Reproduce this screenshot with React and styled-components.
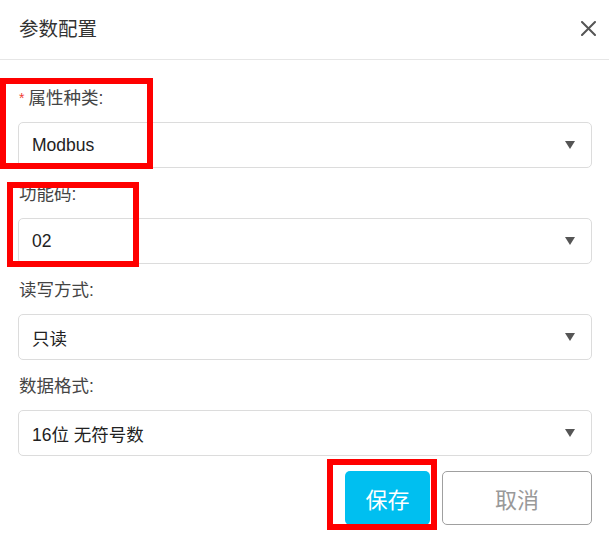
import React from "react";
import styled, { createGlobalStyle } from "styled-components";

const GlobalStyle = createGlobalStyle`
  html, body {
    margin: 0;
    padding: 0;
    background: #ffffff;
  }
  body {
    font-family: "Liberation Sans", Arial, "Noto Sans CJK SC", sans-serif;
  }
  * {
    box-sizing: border-box;
  }
`;

const fields = [
  { label: "属性种类:", value: "Modbus", required: true },
  { label: "功能码:", value: "02" },
  { label: "读写方式:", value: "只读" },
  { label: "数据格式:", value: "16位 无符号数" },
];

const App = () => {
  return (
    <>
      <GlobalStyle />
      <Dialog>
        <Header>
          <Title>参数配置</Title>
          <CloseButton aria-label="close">
            <svg width="15" height="15" viewBox="0 0 15 15">
              <path
                d="M1 1 L14 14 M14 1 L1 14"
                stroke="#555"
                strokeWidth="2"
                strokeLinecap="round"
              />
            </svg>
          </CloseButton>
        </Header>
        <Body>
          {fields.map((f) => (
            <Field key={f.label}>
              <Label>
                {f.required && <Star>*</Star>}
                {f.label}
              </Label>
              <Select>
                <SelectValue>{f.value}</SelectValue>
                <Arrow />
              </Select>
            </Field>
          ))}
          <Footer>
            <SaveButton>保存</SaveButton>
            <CancelButton>取消</CancelButton>
          </Footer>
        </Body>

        <Mark $top={78} $left={0} $width={153} $height={91} />
        <Mark $top={182} $left={7} $width={132} $height={85} />
        <Mark $top={459} $left={327} $width={110} $height={71} />
      </Dialog>
    </>
  );
};

const Dialog = styled.div`
  position: relative;
  width: 609px;
  height: 533px;
  background: #fff;
  overflow: hidden;
`;

const Header = styled.div`
  display: flex;
  align-items: center;
  justify-content: space-between;
  height: 60px;
  padding: 0 13px 2px 19px;
  border-bottom: 1px solid #e6e6e6;
`;

const Title = styled.div`
  font-size: 19.5px;
  line-height: 24px;
  color: #333;
`;

const CloseButton = styled.button`
  display: flex;
  align-items: center;
  justify-content: center;
  width: 15px;
  height: 15px;
  padding: 0;
  border: none;
  background: none;
  cursor: pointer;
`;

const Body = styled.div`
  display: flex;
  flex-direction: column;
  padding: 26px 17px 0 18px;
`;

const Field = styled.div`
  display: flex;
  flex-direction: column;
  gap: 12px;
  margin-bottom: 14px;
`;

const Label = styled.div`
  font-size: 17.5px;
  line-height: 24px;
  color: #444;
  padding-left: 1px;
`;

const Star = styled.span`
  color: #f04134;
  font-size: 14px;
  margin-right: 4px;
  vertical-align: top;
`;

const Select = styled.div`
  display: flex;
  align-items: center;
  justify-content: space-between;
  height: 46px;
  padding: 0 16px 0 13px;
  border: 1px solid #dcdcdc;
  border-radius: 5px;
  background: #fff;
`;

const SelectValue = styled.span`
  font-size: 17.5px;
  color: #222;
`;

const Arrow = styled.span`
  width: 0;
  height: 0;
  border-left: 5px solid transparent;
  border-right: 5px solid transparent;
  border-top: 8px solid #555;
`;

const Footer = styled.div`
  display: flex;
  justify-content: flex-end;
  gap: 12px;
  margin-top: 1px;
`;

const BaseButton = styled.button`
  height: 54px;
  font-family: "Liberation Sans", "Noto Sans CJK SC", sans-serif;
  font-size: 22px;
  border-radius: 5px;
  cursor: pointer;
`;

const SaveButton = styled(BaseButton)`
  width: 85px;
  color: #fff;
  background: #00bff0;
  border: none;
`;

const CancelButton = styled(BaseButton)`
  width: 150px;
  color: #999;
  background: #fff;
  border: 1px solid #a0a0a0;
`;

const Mark = styled.div`
  position: absolute;
  top: ${(p) => p.$top}px;
  left: ${(p) => p.$left}px;
  width: ${(p) => p.$width}px;
  height: ${(p) => p.$height}px;
  border: 6px solid #ff0000;
  pointer-events: none;
`;

export default App;
